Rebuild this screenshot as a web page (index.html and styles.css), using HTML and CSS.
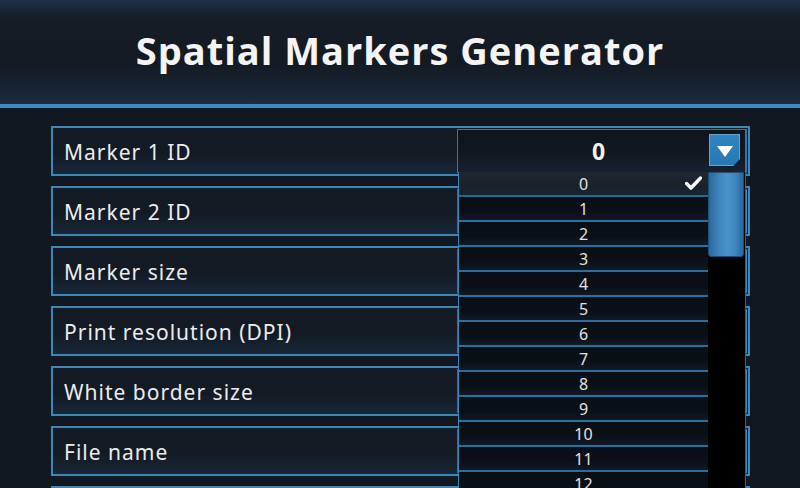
FILE: index.html
```html
<!DOCTYPE html>
<html lang="en">
<head>
<meta charset="utf-8">
<title>Spatial Markers Generator</title>
<link rel="stylesheet" href="styles.css">
</head>
<body>
<header class="app-header">
  <h1 class="app-title">Spatial Markers Generator</h1>
</header>
<main class="form">
  <div class="row">
    <span class="row-label">Marker 1 ID</span>
    <div class="field dropdown">
      <span class="dropdown-value">0</span>
      <span class="dropdown-btn">
        <svg width="16" height="11" viewBox="0 0 16 11"><path d="M0 0H16L8 11Z" fill="#fff"/></svg>
      </span>
      <div class="dropdown-list">
        <ul class="options">
          <li class="option selected">0
            <svg class="check" width="17" height="14" viewBox="0 0 17 14"><path d="M1.5 7.5L6 12L15.5 2" fill="none" stroke="#fff" stroke-width="3.4" stroke-linecap="round" stroke-linejoin="round"/></svg>
          </li>
          <li class="option">1</li>
          <li class="option">2</li>
          <li class="option">3</li>
          <li class="option">4</li>
          <li class="option">5</li>
          <li class="option">6</li>
          <li class="option">7</li>
          <li class="option">8</li>
          <li class="option">9</li>
          <li class="option">10</li>
          <li class="option">11</li>
          <li class="option">12</li>
        </ul>
        <div class="scrolltrack"><div class="scrollthumb"></div></div>
      </div>
    </div>
  </div>
  <div class="row"><span class="row-label">Marker 2 ID</span><div class="field"></div></div>
  <div class="row"><span class="row-label">Marker size</span><div class="field"></div></div>
  <div class="row"><span class="row-label">Print resolution (DPI)</span><div class="field"></div></div>
  <div class="row"><span class="row-label">White border size</span><div class="field"></div></div>
  <div class="row"><span class="row-label">File name</span><div class="field"></div></div>
  <div class="row"><span class="row-label"></span><div class="field"></div></div>
</main>
</body>
</html>
```
FILE: styles.css
```css
html, body {
  margin: 0;
  padding: 0;
}

body {
  width: 800px;
  height: 488px;
  overflow: hidden;
  background: #111821;
  font-family: "Noto Sans", "DejaVu Sans", sans-serif;
  color: #ececec;
}

.app-header {
  height: 104px;
  border-bottom: 4px solid #3e89bd;
  background: linear-gradient(to bottom, #1d3047 0px, #161d27 18px, #141a23 60%, #172536 88%, #1a2c42 100%);
  display: flex;
  align-items: center;
  justify-content: center;
}

.app-title {
  margin: 0;
  font-family: "Open Sans", "Noto Sans", sans-serif;
  font-weight: 700;
  font-size: 38px;
  letter-spacing: 1px;
  color: #f4f4f4;
  position: relative;
  top: -2px;
}

.form {
  padding: 18px 50px 0 51px;
  display: flex;
  flex-direction: column;
  gap: 10px;
}

.row {
  height: 46px;
  border: 2px solid #3d86b6;
  background: linear-gradient(to bottom, #141b25 0%, #131a24 55%, #17283a 100%);
  display: flex;
  align-items: center;
  justify-content: space-between;
  flex-shrink: 0;
}

.row-label {
  padding-left: 11px;
  font-size: 21px;
  letter-spacing: 1px;
  color: #ececec;
  position: relative;
  top: 1px;
}

.field {
  align-self: stretch;
  width: 287px;
  margin: 1px 1px 1px 0;
  border: 1px solid #2f6f9c;
  border-right-width: 2px;
  border-right-color: #3d86b6;
  background: linear-gradient(to bottom, #141a23 0%, #16202b 100%);
}

.dropdown {
  position: relative;
  display: flex;
  align-items: center;
  justify-content: center;
  border-color: #3574a3;
  background: linear-gradient(to bottom, #10151c 0%, #121821 60%, #172231 100%);
}

.dropdown-value {
  font-weight: 700;
  font-size: 23px;
  color: #f2f2f2;
  margin-right: 6px;
}

.dropdown-btn {
  position: absolute;
  right: 5px;
  top: 4px;
  width: 29px;
  height: 30px;
  border: 1px solid #5fa7d6;
  background: linear-gradient(to bottom, #2f84c0 0%, #2878b2 100%);
  display: flex;
  align-items: center;
  justify-content: center;
  clip-path: polygon(0 0, 100% 0, 100% 78%, 78% 100%, 0 100%);
}

.dropdown-btn svg {
  position: relative;
  top: 1px;
}

.dropdown-list {
  position: absolute;
  left: 0;
  top: 100%;
  width: 286px;
  height: 330px;
  display: flex;
  background: #000;
  border-left: 1px solid #3b82b2;
  border-right: 1px solid #2c6690;
  z-index: 2;
}

.options {
  list-style: none;
  margin: 0;
  padding: 0;
  width: 249px;
  display: flex;
  flex-direction: column;
}

.option {
  height: 23px;
  flex-shrink: 0;
  border-bottom: 2px solid #2f6d9a;
  background: linear-gradient(to bottom, #0a0e15 0%, #0b1018 65%, #0d1a29 100%);
  display: flex;
  align-items: center;
  justify-content: center;
  font-size: 16px;
  color: #e2e2e2;
  position: relative;
}

.option.selected {
  background: linear-gradient(to bottom, #1f262f 0%, #1a2129 60%, #162637 100%);
  border-bottom-color: #2a6590;
}

.check {
  position: absolute;
  right: 6px;
  top: 4px;
}

.scrolltrack {
  flex: 1;
  background: #000;
  position: relative;
}

.scrollthumb {
  width: 36px;
  height: 85px;
  border: 1px solid #1e5077;
  box-sizing: border-box;
  border-radius: 0 0 3px 3px;
  background: linear-gradient(to right, #2a689a 0%, #3e86be 30%, #4a93c9 55%, #3e86be 78%, #2a689a 100%);
}
```
